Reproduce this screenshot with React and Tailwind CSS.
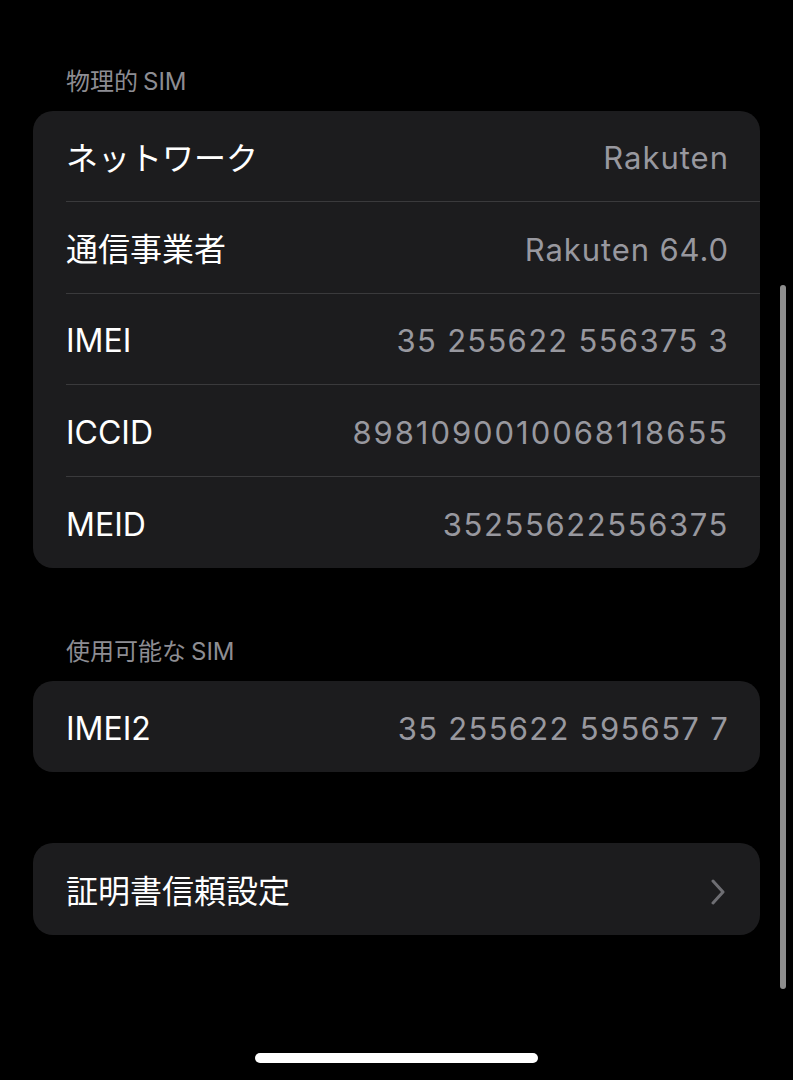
import React from "react";

const font = { fontFamily: '"Inter", "Noto Sans CJK JP", sans-serif' };

const physicalRows = [
  { label: "ネットワーク", value: "Rakuten", track: "tracking-[1px]" },
  { label: "通信事業者", value: "Rakuten 64.0", track: "tracking-[0.9px]" },
  { label: "IMEI", value: "35 255622 556375 3", track: "tracking-[1.3px]" },
  { label: "ICCID", value: "8981090010068118655", track: "tracking-[1.95px]" },
  { label: "MEID", value: "35255622556375", track: "tracking-[1.6px]" },
];

const Row = ({ label, value, track, last, chevron }) => (
  <div className="flex h-[91.4px] pl-[33px]">
    <div
      className={
        "flex flex-1 items-center justify-between pr-[33px] pt-[5px] " +
        (last ? "" : "border-b border-[#3a3a3c]")
      }
    >
      <span className="text-[32px] text-white">{label}</span>
      {value && (
        <span className={"-mr-[2px] text-[31px] text-[#98989f] " + (track || "")}>{value}</span>
      )}
      {chevron && (
        <svg width="16" height="26" viewBox="0 0 16 26" className="mr-[1px]">
          <path
            d="M3 2 L13 13 L3 24"
            fill="none"
            stroke="#6e6e73"
            strokeWidth="3"
            strokeLinecap="round"
            strokeLinejoin="round"
          />
        </svg>
      )}
    </div>
  </div>
);

const Header = ({ jp, en }) => (
  <div className="h-[32px] pl-[66px] text-[24px] leading-[32px] text-[#8d8d93]">
    {jp}
    <span className="ml-[5px]">{en}</span>
  </div>
);

const App = () => {
  return (
    <div className="relative h-[1080px] w-[793px] overflow-hidden bg-black" style={font}>
      <div className="px-[33px] pt-[66px]">
        <div className="-mx-[33px]">
          <Header jp="物理的" en="SIM" />
        </div>
        <div className="mt-[13px] overflow-hidden rounded-[20px] bg-[#1c1c1e]">
          {physicalRows.map((r, i) => (
            <Row key={r.label} {...r} last={i === physicalRows.length - 1} />
          ))}
        </div>

        <div className="-mx-[33px] mt-[68px]">
          <Header jp="使用可能な" en="SIM" />
        </div>
        <div className="mt-[13px] overflow-hidden rounded-[20px] bg-[#1c1c1e]">
          <Row label="IMEI2" value="35 255622 595657 7" track="tracking-[1.3px]" last />
        </div>

        <div className="mt-[71px] overflow-hidden rounded-[20px] bg-[#1c1c1e]">
          <Row label="証明書信頼設定" chevron last />
        </div>
      </div>

      {/* scroll indicator */}
      <div className="absolute left-[780px] top-[285px] h-[704px] w-[6px] rounded-full bg-[#8e8e8e]" />

      {/* home indicator */}
      <div className="absolute left-[255px] top-[1053px] h-[10px] w-[283px] rounded-full bg-white" />
    </div>
  );
};

export default App;
